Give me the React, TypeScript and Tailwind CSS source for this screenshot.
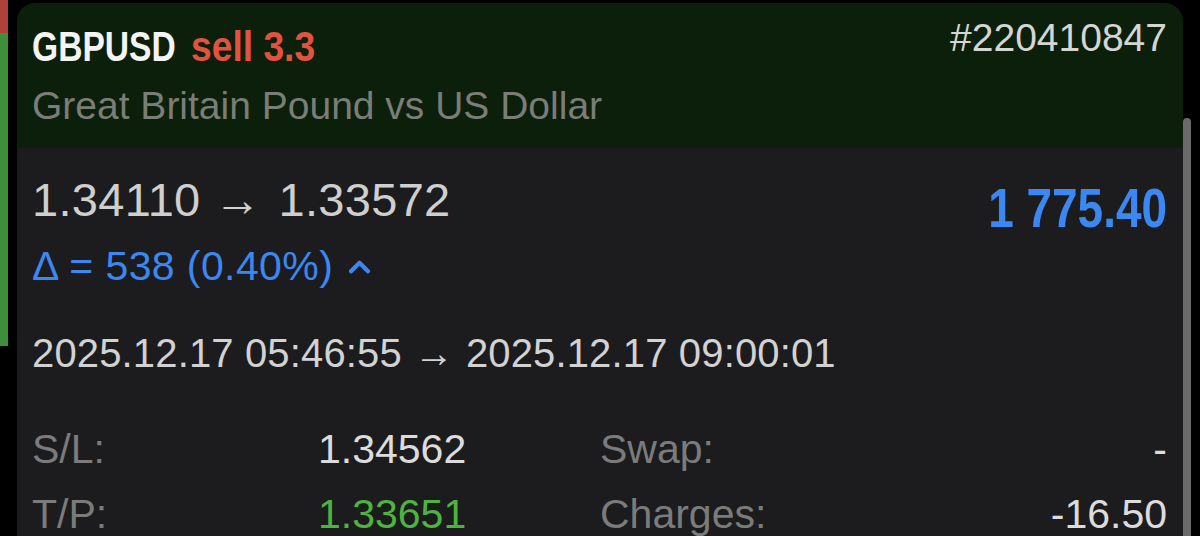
export default function App() {
  return (
    <div className="relative h-[536px] w-[1200px] overflow-hidden bg-black font-['Liberation_Sans',Arial,sans-serif]">
      <div className="flex h-full">
        {/* strip of the list behind the card */}
        <div className="flex w-[8px] shrink-0 flex-col">
          <div className="h-[33px] bg-[#b0413a]" />
          <div className="h-[313px] bg-[#3f8e3b]" />
        </div>

        <div className="ml-[9px] mt-[3px] flex w-[1166px] shrink-0 flex-col overflow-hidden rounded-t-[18px]">
          {/* header */}
          <div className="h-[145px] shrink-0 bg-[#0c1f0a] pl-[15px] pr-[16px] pt-[20px]">
            <div className="flex items-start justify-between">
              <div className="flex whitespace-nowrap text-[42px] font-bold leading-[48px]">
                <span className="w-[159px]">
                  <span className="inline-block origin-left scale-x-[0.8] text-[#f4f4f2]">GBPUSD</span>
                </span>
                <span className="w-[124px]">
                  <span className="inline-block origin-left scale-x-[0.886] text-[#e2533f]">sell 3.3</span>
                </span>
              </div>
              <div className="text-[39px] leading-[30px] text-[#d4d6d2]">#220410847</div>
            </div>
            <div className="mt-[11px] text-[39px] leading-[48px] text-[#7a7d78]">
              Great Britain Pound vs US Dollar
            </div>
          </div>

          {/* body */}
          <div className="flex-1 bg-[#1c1c1e] pl-[15px] pr-[16px] pt-[26px]">
            <div className="flex items-start justify-between">
              <div className="flex whitespace-nowrap text-[47px] leading-[52px] tracking-[0.3px] text-[#cfcfcf]">
                <span>1.34110</span>
                <span className="inline-block w-[78px] pr-[4px] text-center">→</span>
                <span>1.33572</span>
              </div>
              <div className="mt-[8px] whitespace-nowrap text-[56px] font-bold leading-[52px] text-[#3b88f2]">
                <span className="inline-block origin-right scale-x-[0.82]">1 775.40</span>
              </div>
            </div>

            <div className="mt-[8px] flex items-center gap-[15px] text-[41px] leading-[48px] tracking-[0.4px] text-[#3b88f2]">
              <span>Δ = 538 (0.40%)</span>
              <svg viewBox="0 0 24 16" className="h-[15px] w-[23px]" fill="none" stroke="currentColor" strokeWidth="4.5" strokeLinecap="round" strokeLinejoin="round">
                <path d="M3 13 12 4l9 9" />
              </svg>
            </div>

            <div className="mt-[39px] flex whitespace-nowrap text-[40px] leading-[48px] tracking-[0.15px] text-[#d2d2d2]">
              <span>2025.12.17 05:46:55</span>
              <span className="inline-block w-[64px] text-center">→</span>
              <span>2025.12.17 09:00:01</span>
            </div>

            <div className="mt-[48px] grid grid-cols-[286px_282px_1fr_auto] gap-y-[17px] text-[41px] leading-[48px]">
              <span className="text-[#7b7b7b]">S/L:</span>
              <span className="text-[#dcdcdc]">1.34562</span>
              <span className="text-[#7b7b7b]">Swap:</span>
              <span className="text-right text-[#dcdcdc]">-</span>
              <span className="text-[#7b7b7b]">T/P:</span>
              <span className="text-[#4db53e]">1.33651</span>
              <span className="text-[#7b7b7b]">Charges:</span>
              <span className="text-right text-[#dcdcdc]">-16.50</span>
            </div>
          </div>
        </div>
      </div>

      {/* scroll indicator */}
      <div className="absolute left-[1183px] top-[118px] h-[440px] w-[8px] rounded-full bg-[#6a6a6a]" />
    </div>
  );
}
